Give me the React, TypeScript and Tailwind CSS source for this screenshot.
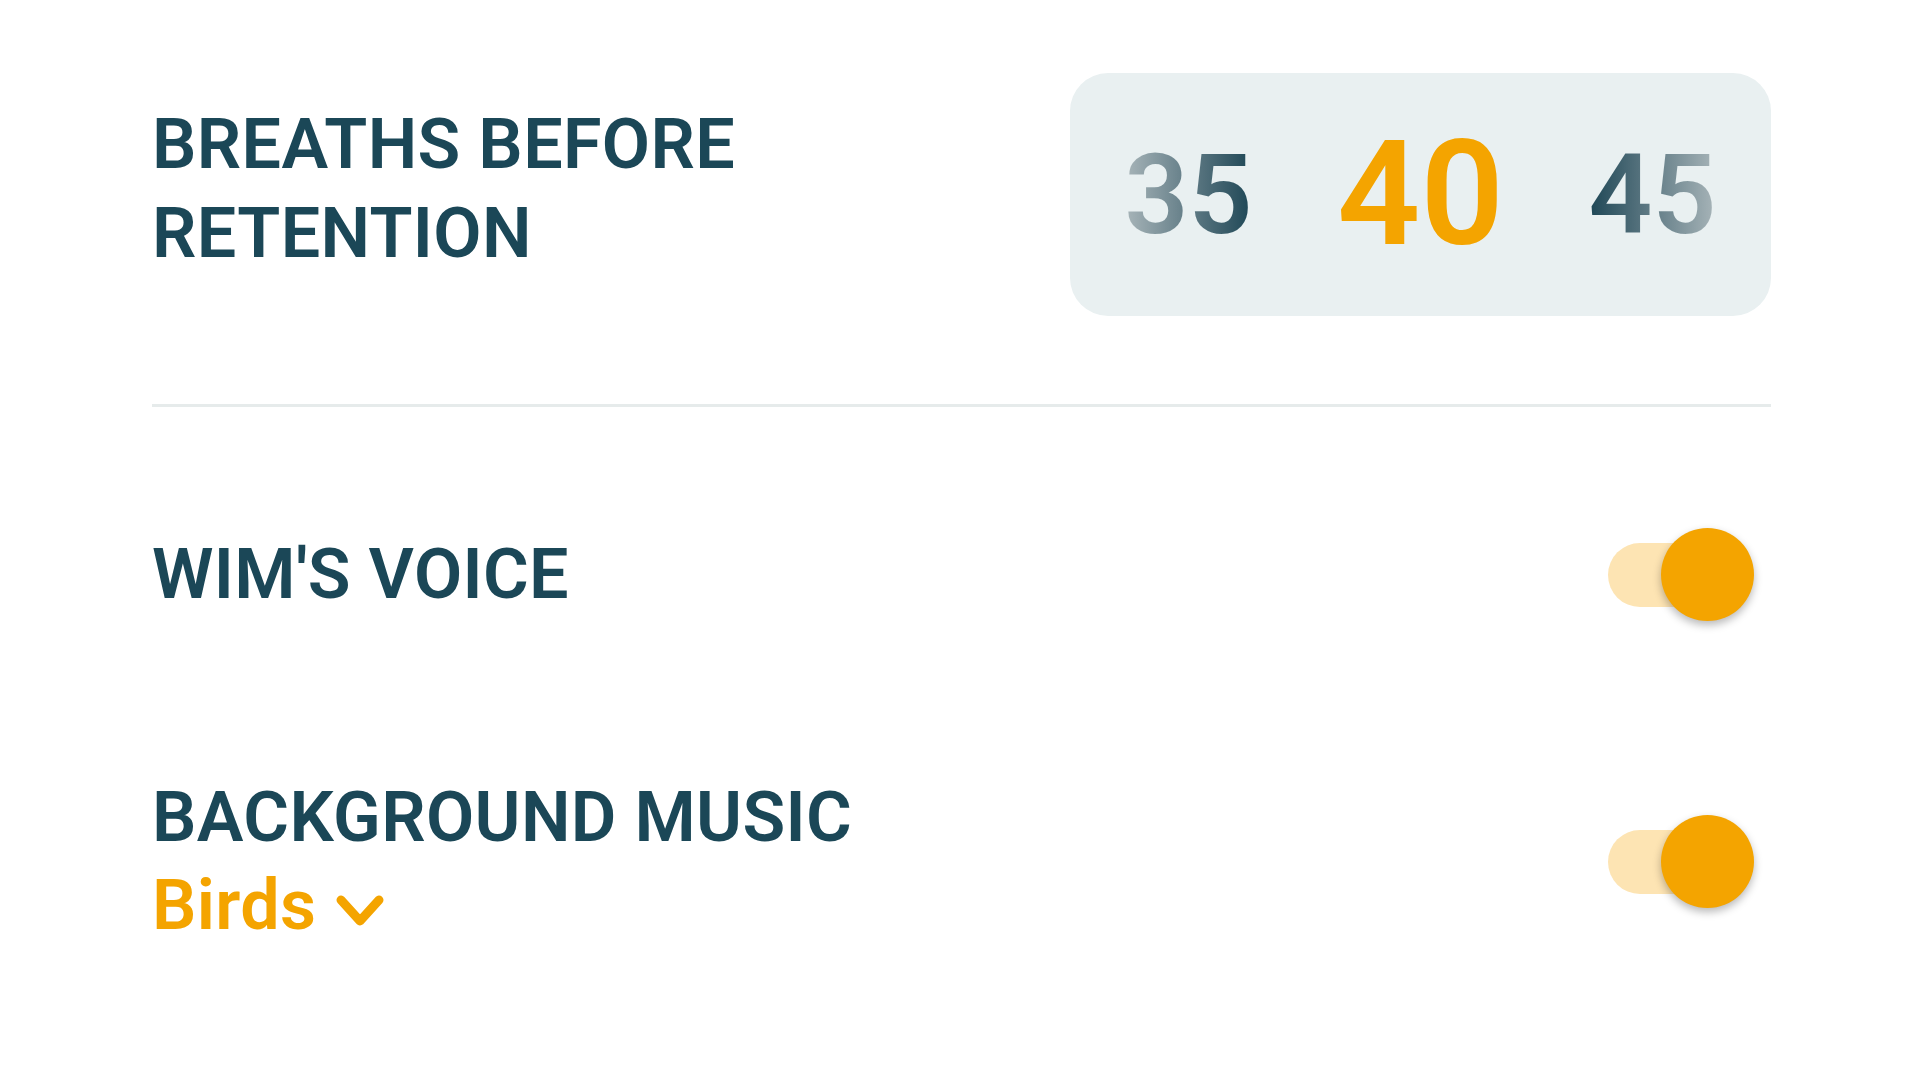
import React from "react";

const font = { fontFamily: "Roboto, 'Noto Sans', sans-serif" };

const Toggle = () => (
  <div className="relative w-[146px] h-[93px] mr-[17px]">
    <div className="absolute left-0 right-[20px] top-[15px] h-[64px] rounded-full bg-[#fde4b3]" />
    <div className="absolute right-0 top-0 w-[93px] h-[93px] rounded-full bg-[#f4a400] shadow-[0_4px_8px_rgba(0,0,0,0.28)]" />
  </div>
);

const Chevron = () => (
  <svg width="50" height="36" viewBox="0 0 50 36" className="ml-[19px] mt-[12px]">
    <path d="M6 7 L25 28 L44 7" fill="none" stroke="#f4a400" strokeWidth="9" strokeLinecap="round" strokeLinejoin="round" />
  </svg>
);

export default function App() {
  return (
    <div className="w-[1920px] h-[1080px] bg-white pl-[152px] pr-[149px] pt-[73px] text-[#1b4757]" style={font}>
      {/* breaths before retention */}
      <div className="flex items-center justify-between">
        <div className="text-[70px] leading-[89px] font-semibold tracking-[0.005em] pb-[11px]">
          <div>BREATHS BEFORE</div>
          <div>RETENTION</div>
        </div>
        <div className="w-[701px] h-[243px] rounded-[38px] bg-[#e9f0f1] flex items-center justify-center">
          <div className="w-[232px] flex justify-center">
            <span className="text-[112px] leading-none font-semibold bg-linear-to-r from-[#a8b5b9] to-[#1d4756] bg-clip-text text-transparent">35</span>
          </div>
          <div className="w-[232px] flex justify-center">
            <span className="text-[146px] leading-none font-semibold text-[#f4a400]">40</span>
          </div>
          <div className="w-[232px] flex justify-center">
            <span className="text-[112px] leading-none font-semibold bg-linear-to-r from-[#1d4756] to-[#a8b5b9] bg-clip-text text-transparent">45</span>
          </div>
        </div>
      </div>

      <div className="mt-[88px] h-[3px] bg-[#e6ebeb]" />

      {/* wim's voice */}
      <div className="mt-[121px] flex items-center justify-between">
        <div className="text-[70px] leading-[89px] font-semibold tracking-[0.005em]">WIM'S VOICE</div>
        <Toggle />
      </div>

      {/* background music */}
      <div className="mt-[152px] flex items-center justify-between">
        <div className="text-[70px] leading-[88px] font-semibold tracking-[0.005em]">
          <div>BACKGROUND MUSIC</div>
          <div className="flex items-center text-[#f4a400]">
            Birds
            <Chevron />
          </div>
        </div>
        <Toggle />
      </div>
    </div>
  );
}
